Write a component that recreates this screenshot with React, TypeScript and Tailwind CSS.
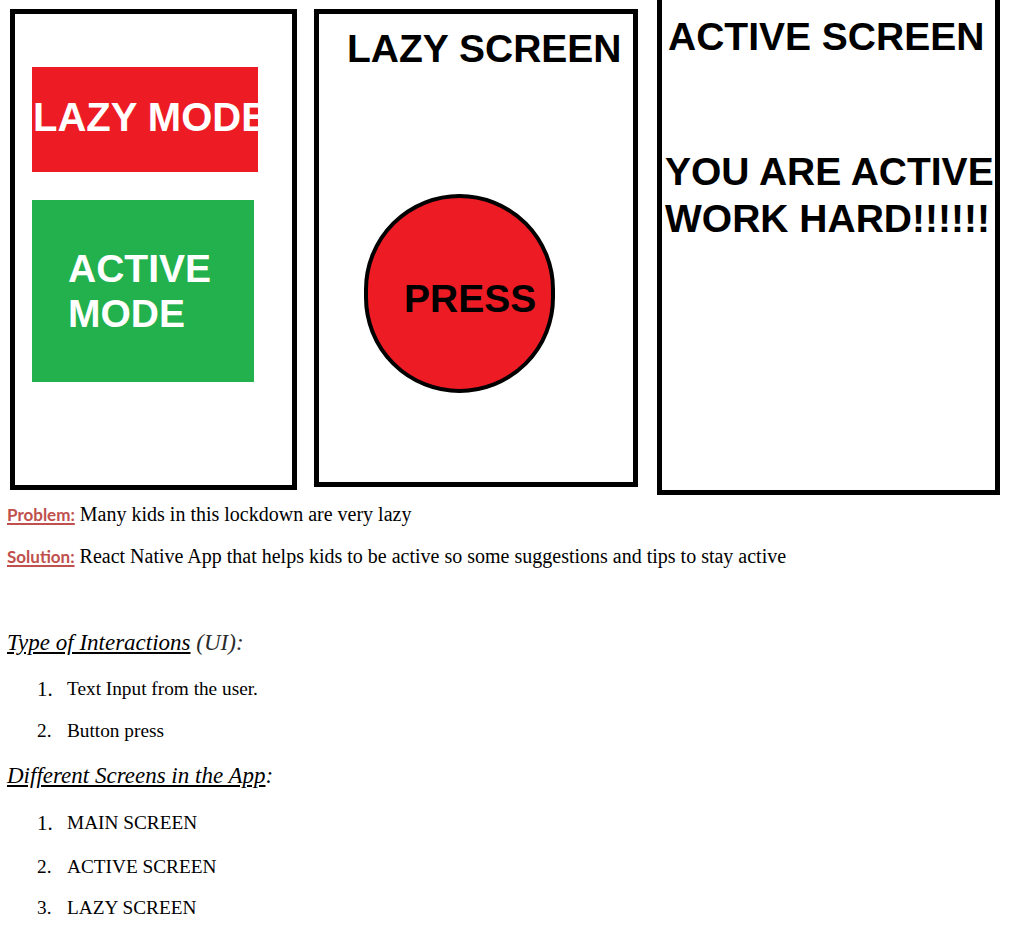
import React from "react";

const sans = "font-['Liberation_Sans',Arial,sans-serif]";
const serif = "font-['Liberation_Serif','Times_New_Roman',serif]";

function MainScreen() {
  return (
    <div className="mt-[9px] w-[287px] h-[481px] border-[5px] border-black bg-white shrink-0">
      <div className="ml-[17px] mt-[53px] w-[226px] h-[105px] bg-[#ed1c24] flex items-center overflow-hidden">
        <span className={`${sans} pl-px pb-[4px] text-[40px] leading-[45px] font-bold text-white whitespace-nowrap`}>LAZY MODE</span>
      </div>
      <div className="ml-[17px] mt-[28px] w-[222px] h-[182px] bg-[#22b14c] flex items-center">
        <span className={`${sans} pl-[36px] text-[39px] leading-[45px] font-bold text-white`}>
          ACTIVE
          <br />
          MODE
        </span>
      </div>
    </div>
  );
}

function LazyScreen() {
  return (
    <div className="ml-[17px] mt-[9px] w-[324px] h-[478px] border-[5px] border-black bg-white shrink-0">
      <div className={`${sans} pl-[28px] mt-[12px] text-[39px] leading-[45px] font-bold text-black whitespace-nowrap`}>LAZY SCREEN</div>
      <div className="ml-[45px] mt-[123px] w-[191px] h-[199px] rounded-full border-4 border-black bg-[#ed1c24] flex items-center">
        <span className={`${sans} pl-[36px] pt-[10px] text-[39px] leading-[45px] font-bold text-black`}>PRESS</span>
      </div>
    </div>
  );
}

function ActiveScreen() {
  return (
    <div className="ml-[19px] w-[343px] h-[495px] border-[5px] border-t-0 border-black bg-white shrink-0 overflow-hidden">
      <div className={`${sans} pl-[6px] pt-[14px] text-[39px] leading-[45px] font-bold text-black whitespace-nowrap`}>ACTIVE SCREEN</div>
      <div className={`${sans} pl-[3px] mt-[89px] text-[39px] leading-[47px] font-bold text-black whitespace-nowrap`}>
        YOU ARE ACTIVE
        <br />
        WORK HARD!!!!!!
      </div>
    </div>
  );
}

function Label({ children }: { children: React.ReactNode }) {
  return (
    <span className="font-['Lato','Open_Sans',sans-serif] text-[17px] font-bold text-[#c0504d] underline decoration-2 underline-offset-2">
      {children}
    </span>
  );
}

function Item({ n, children, big, mt }: { n: string; children: React.ReactNode; big?: boolean; mt: string }) {
  return (
    <div className={`${mt} flex text-[19.3px] leading-[24px] text-black`}>
      <span className={`w-[67px] pl-[37px] shrink-0 ${big ? "text-[21px]" : ""}`}>{n}</span>
      <span>{children}</span>
    </div>
  );
}

export default function App() {
  return (
    <div className="w-[1016px] h-[938px] bg-white overflow-hidden">
      <div className="flex items-start pl-[10px]">
        <MainScreen />
        <LazyScreen />
        <ActiveScreen />
      </div>

      <div className={`${serif} pl-[7px]`}>
        <div className="mt-[7px] text-[20px] leading-[24px] text-black">
          <Label>Problem:</Label> Many kids in this lockdown are very lazy
        </div>
        <div className="mt-[17px] text-[20px] leading-[24px] text-black">
          <Label>Solution:</Label> React Native App that helps kids to be active so some suggestions and tips to stay active
        </div>

        <div className="mt-[60px] text-[23px] leading-[28px] italic text-black">
          <span className="underline underline-offset-2">Type of Interactions</span>
          <span className="text-[#2b2b2b]"> (UI):</span>
        </div>
      </div>
      <div className={serif}>
        <Item n="1." big mt="mt-[20px]">Text Input from the user.</Item>
        <Item n="2." mt="mt-[18px]">Button press</Item>
      </div>
      <div className={`${serif} pl-[7px] mt-[19px] text-[23px] leading-[28px] italic text-black`}>
        <span className="underline underline-offset-2">Different Screens in the App</span>:
      </div>
      <div className={serif}>
        <Item n="1." big mt="mt-[21px]">MAIN SCREEN</Item>
        <Item n="2." mt="mt-[20px]">ACTIVE SCREEN</Item>
        <Item n="3." mt="mt-[17px]">LAZY SCREEN</Item>
      </div>
    </div>
  );
}
